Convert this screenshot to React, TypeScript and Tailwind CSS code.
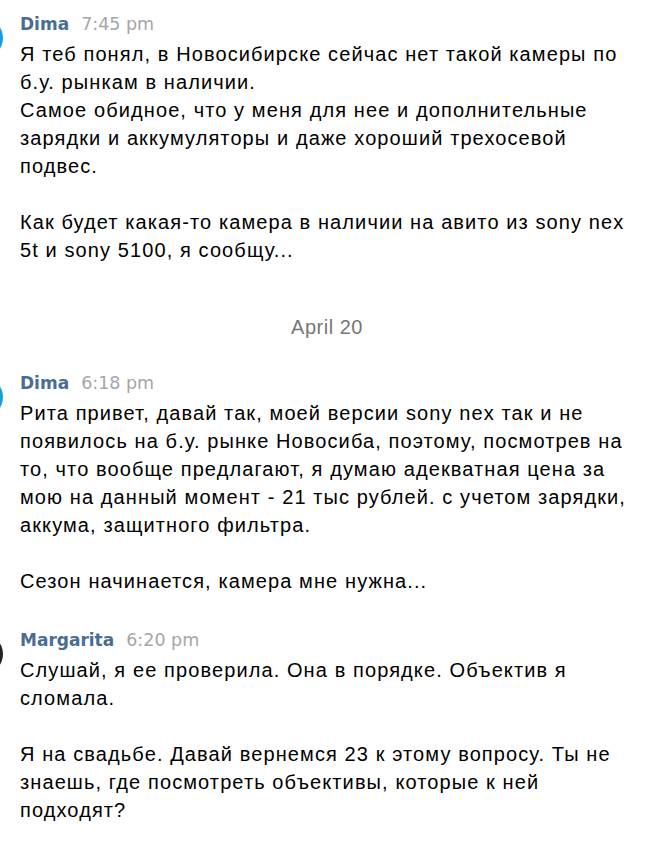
import React from "react";

type Msg = {
  name: string;
  time: string;
  avatar: string;
  lines: string[];
};

const body = '"Liberation Sans", Arial, sans-serif';
const meta = '"DejaVu Sans", "Liberation Sans", sans-serif';

function Message({ msg }: { msg: Msg }) {
  return (
    <div className="flex">
      <div className={`w-[40px] h-[40px] rounded-full ml-[-37px] mt-[8px] shrink-0 ${msg.avatar}`} />
      <div className="pl-[17px]">
        <div className="flex items-baseline gap-[12px] leading-[28px]" style={{ fontFamily: meta }}>
          <span className="text-[17px] font-bold text-[#4b6c92]">{msg.name}</span>
          <span className="text-[17.5px] text-[#a6a6a6]">{msg.time}</span>
        </div>
        <div className="mt-[2px] text-[20px] leading-[28px] tracking-[1.1px] text-black" style={{ fontFamily: body }}>
          {msg.lines.map((l, i) => (
            <div key={i} className="whitespace-nowrap h-[28px]">{l}</div>
          ))}
        </div>
      </div>
    </div>
  );
}

export default function App() {
  const first: Msg = {
    name: "Dima",
    time: "7:45 pm",
    avatar: "bg-[#1d9bd7]",
    lines: [
      "Я теб понял, в Новосибирске сейчас нет такой камеры по",
      "б.у. рынкам в наличии.",
      "Самое обидное, что у меня для нее и дополнительные",
      "зарядки и аккумуляторы и даже хороший трехосевой",
      "подвес.",
      "",
      "Как будет какая-то камера в наличии на авито из sony nex",
      "5t и sony 5100, я сообщу...",
    ],
  };
  const second: Msg = {
    name: "Dima",
    time: "6:18 pm",
    avatar: "bg-[#1d9bd7]",
    lines: [
      "Рита привет, давай так, моей версии sony nex так и не",
      "появилось на б.у. рынке Новосиба, поэтому, посмотрев на",
      "то, что вообще предлагают, я думаю адекватная цена за",
      "мою на данный момент - 21 тыс рублей. с учетом зарядки,",
      "аккума, защитного фильтра.",
      "",
      "Сезон начинается, камера мне нужна...",
    ],
  };
  const third: Msg = {
    name: "Margarita",
    time: "6:20 pm",
    avatar: "bg-[#222222]",
    lines: [
      "Слушай, я ее проверила. Она в порядке. Объектив я",
      "сломала.",
      "",
      "Я на свадьбе. Давай вернемся 23 к этому вопросу. Ты не",
      "знаешь, где посмотреть объективы, которые к ней",
      "подходят?",
    ],
  };

  return (
    <div className="w-[648px] h-[848px] bg-white overflow-hidden pt-[10px]">
      <Message msg={first} />
      <div
        className="mt-[49px] mb-[28px] text-center text-[20px] leading-[28px] tracking-[0.5px] text-[#777777] pl-[6px]"
        style={{ fontFamily: body }}
      >
        April 20
      </div>
      <Message msg={second} />
      <div className="h-[31px]" />
      <Message msg={third} />
    </div>
  );
}
